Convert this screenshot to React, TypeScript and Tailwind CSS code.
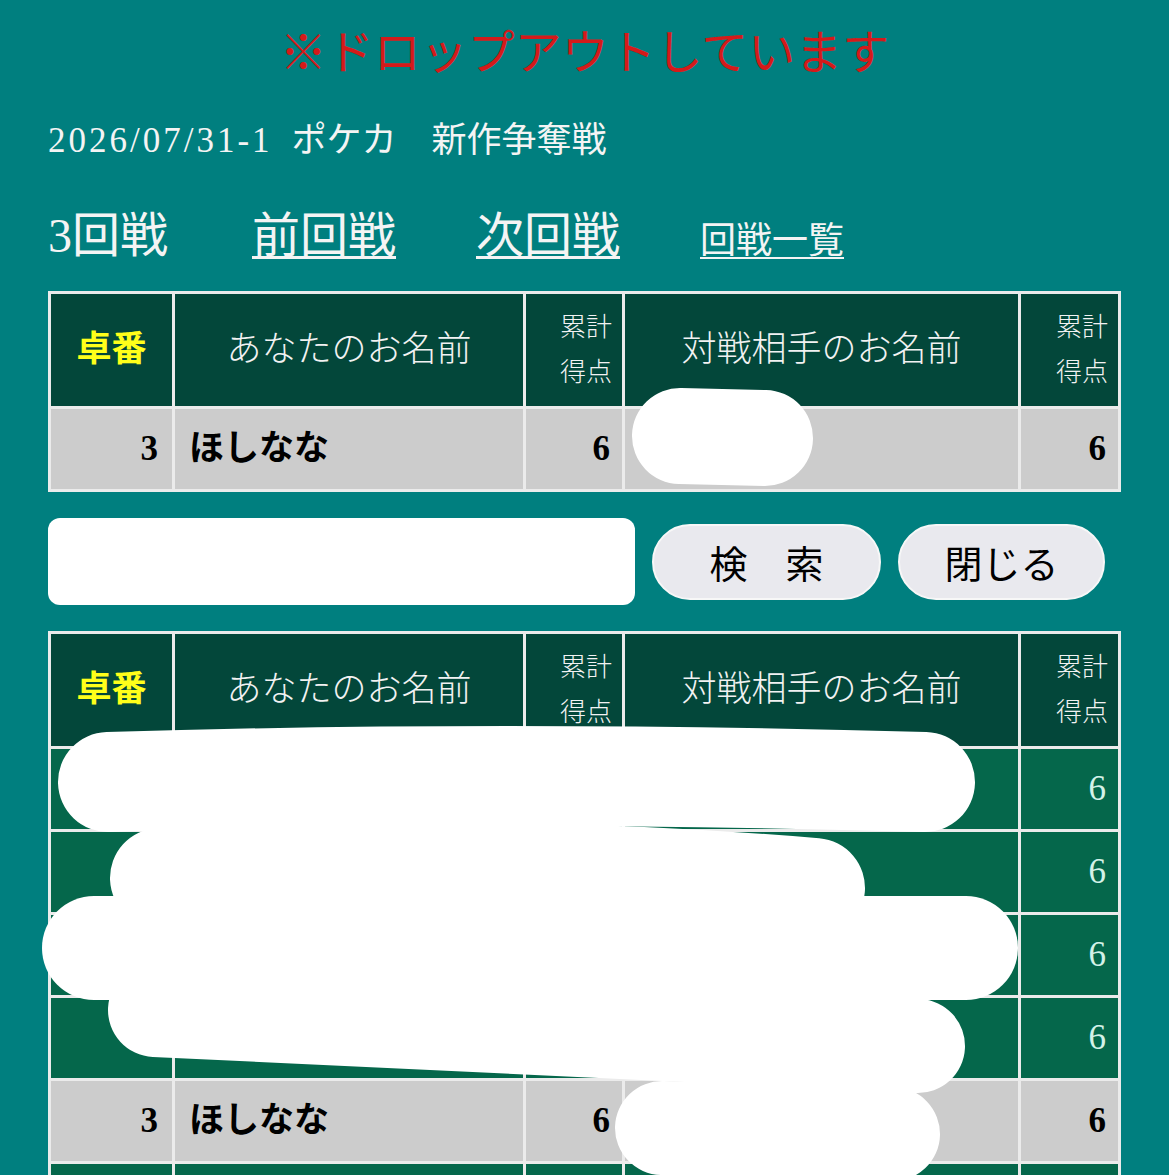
import type { ReactNode } from "react";

const serif = "font-['Liberation_Serif','Noto_Sans_CJK_JP',serif]";
const sans = "font-['Noto_Sans_CJK_JP','Noto_Sans',sans-serif]";

type Row = { table: string; name: string; score: string; opp: string; oppScore: string; mine?: boolean };

const others: Row[] = [
  { table: "", name: "", score: "", opp: "", oppScore: "6" },
  { table: "", name: "", score: "", opp: "", oppScore: "6" },
  { table: "", name: "", score: "", opp: "", oppScore: "6" },
  { table: "2", name: "", score: "", opp: "", oppScore: "6" },
  { table: "3", name: "ほしなな", score: "6", opp: "", oppScore: "6", mine: true },
  { table: "", name: "", score: "", opp: "", oppScore: "" },
];

function HeaderCell({ children, className = "" }: { children: ReactNode; className?: string }) {
  return <div className={`bg-[#03473a] h-[112px] flex items-center justify-center text-[#f2f2f2] ${className}`}>{children}</div>;
}

function ScoreHead() {
  return (
    <HeaderCell className="flex-col !items-end pr-[10px] text-[26px] leading-[45px] font-light">
      <span>累計</span>
      <span>得点</span>
    </HeaderCell>
  );
}

function MatchTable({ rows }: { rows: Row[] }) {
  return (
    <div className={`grid grid-cols-[121px_348px_96px_393px_97px] gap-[3px] p-[3px] bg-[#ebebeb] ${serif}`}>
      <HeaderCell className="text-[35px] font-bold text-[#ffff1a]">卓番</HeaderCell>
      <HeaderCell className="text-[35px] font-light">あなたのお名前</HeaderCell>
      <ScoreHead />
      <HeaderCell className="text-[35px] font-light">対戦相手のお名前</HeaderCell>
      <ScoreHead />
      {rows.map((r, i) => {
        const cell = r.mine
          ? "bg-[#cccccc] text-black font-bold"
          : "bg-[#05674b] text-[#d4f2e8]";
        return [
          <div key={`${i}a`} className={`${cell} h-[80px] flex items-center justify-end pr-[14px] text-[35px]`}>{r.table}</div>,
          <div key={`${i}b`} className={`${cell} h-[80px] flex items-center pl-[14px] text-[35px]`}>{r.name}</div>,
          <div key={`${i}c`} className={`${cell} h-[80px] flex items-center justify-end pr-[12px] text-[35px]`}>{r.score}</div>,
          <div key={`${i}d`} className={`${cell} h-[80px] flex items-center pl-[14px] text-[35px]`}>{r.opp}</div>,
          <div key={`${i}e`} className={`${cell} h-[80px] flex items-center justify-end pr-[12px] text-[35px]`}>{r.oppScore}</div>,
        ];
      })}
    </div>
  );
}

// hand-drawn white marks hiding the other players' names
function Scribbles() {
  return (
    <svg className="absolute inset-0 pointer-events-none" width="1169" height="1175" viewBox="0 0 1169 1175">
      <g fill="none" stroke="#fff" strokeLinecap="round" strokeLinejoin="round">
        <path d="M680 436 L765 438" strokeWidth="96" />
        <path d="M108 782 Q500 770 925 782" strokeWidth="100" />
        <path d="M160 878 Q500 862 815 888" strokeWidth="100" />
        <path d="M94 948 L966 948" strokeWidth="104" />
        <path d="M155 1010 Q520 1026 918 1046" strokeWidth="94" />
        <path d="M662 1128 L893 1134" strokeWidth="94" />
      </g>
    </svg>
  );
}

export default function App() {
  return (
    <div className={`relative w-[1169px] h-[1175px] overflow-hidden bg-[#007f7f] ${serif}`}>
      <div className="px-[48px]">
        <h1 className="pt-[27px] h-[83px] text-center text-[47px] leading-[52px] text-[#d41a1a] font-normal">
          ※ドロップアウトしています
        </h1>
        <p className="mt-[35px] text-[35px] leading-[46px] text-[#f4f4f4]">
          <span className="tracking-[3px]">2026/07/31-1</span>
          <span className="ml-[19px]">ポケカ　新作争奪戦</span>
        </p>
        <div className="mt-[42px] flex items-end h-[60px] text-[#f4f4f4]">
          <span className="text-[48px] leading-[60px] w-[204px]">3回戦</span>
          <a className="text-[48px] leading-[60px] underline underline-offset-[4px] decoration-[3px] w-[224px]">前回戦</a>
          <a className="text-[48px] leading-[60px] underline underline-offset-[4px] decoration-[3px] w-[224px]">次回戦</a>
          <a className="text-[36px] leading-[50px] underline underline-offset-[4px] decoration-[2px]">回戦一覧</a>
        </div>
        <div className="mt-[25px]">
          <MatchTable rows={[{ table: "3", name: "ほしなな", score: "6", opp: "", oppScore: "6", mine: true }]} />
        </div>
        <div className="mt-[26px] flex items-center">
          <div className="w-[587px] h-[87px] bg-white rounded-[12px]" />
          <button className={`ml-[17px] w-[229px] h-[76px] rounded-full bg-[#e9e9ee] border-2 border-[#f7f7f7] text-[38px] text-black ${sans}`}>
            検　索
          </button>
          <button className={`ml-[17px] w-[207px] h-[76px] rounded-full bg-[#e9e9ee] border-2 border-[#f7f7f7] text-[38px] text-black ${sans}`}>
            閉じる
          </button>
        </div>
        <div className="mt-[26px]">
          <MatchTable rows={others} />
        </div>
      </div>
      <Scribbles />
    </div>
  );
}
